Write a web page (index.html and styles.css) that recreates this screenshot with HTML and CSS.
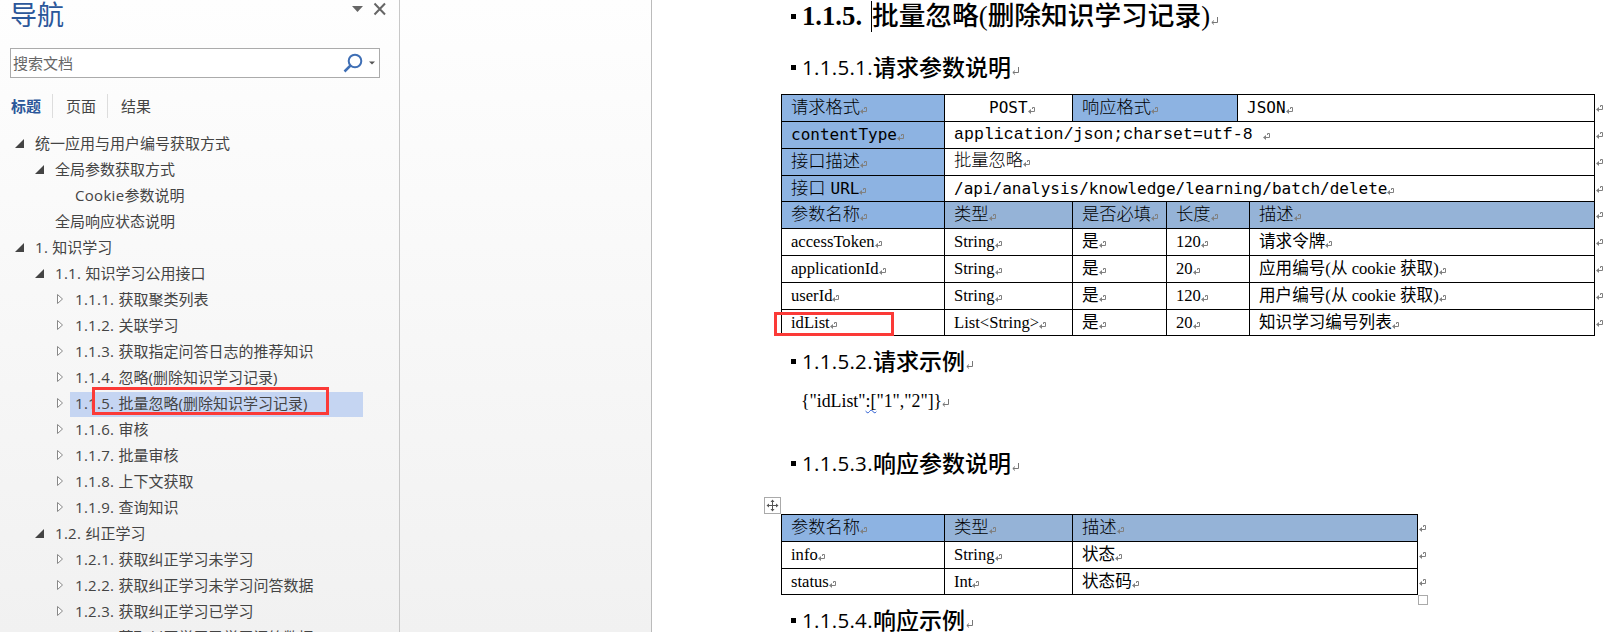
FILE: index.html
```html
<!DOCTYPE html>
<html lang="zh-CN">
<head>
<meta charset="utf-8">
<title>导航</title>
<link rel="stylesheet" href="styles.css">
</head>
<body>
<svg width="0" height="0" class="defs">
  <symbol id="cell" viewBox="0 0 8 8"><path d="M4.500 2V.5H6.500V4.500H1" fill="none" stroke="#808080"/><path d="M0 4.500L3 2V7Z" fill="#808080"/></symbol>
  <symbol id="para" viewBox="0 0 8 8"><path d="M6.500 0V5.500H1M3 3.500L.8 5.500L3 7.500" fill="none" stroke="#777"/></symbol>
</svg>
<div class="app">
  <aside class="nav">
    <header class="nav-head">
      <h1>导航</h1>
      <svg class="tools" width="36" height="14" viewBox="0 0 36 14"><path d="M2 4H13L7.500 10Z" fill="#666"/><path d="M24.500 1.500L35 12.500M35 1.500L24.500 12.500" stroke="#666" stroke-width="2" fill="none"/></svg>
    </header>
    <div class="search"><span>搜索文档</span>
      <svg width="34" height="20" viewBox="0 0 34 20"><circle cx="13" cy="8" r="6.300" fill="none" stroke="#3f6fb5" stroke-width="2"/><path d="M8.500 12.500L2.500 18.500" stroke="#3f6fb5" stroke-width="2.500"/><path d="M27 8.500H33L30 11.500Z" fill="#555"/></svg>
    </div>
    <div class="tabs"><b>标题</b><span>页面</span><span>结果</span></div>
    <ul class="tree" id="tree"></ul>
    <div class="mark mark-nav"></div>
  </aside>
  <div class="gap"></div>
  <main class="page">
    <h2 class="big"><i></i><b>1.1.5.</b><span class="caret"></span><span>批量忽略(删除知识学习记录)</span><svg class="pm"><use href="#para"/></svg></h2>
    <h3 class="h-a"><i></i><b>1.1.5.1.</b><span>请求参数说明</span><svg class="pm"><use href="#para"/></svg></h3>
    <div class="table" id="t1"></div>
    <h3 class="h-b"><i></i><b>1.1.5.2.</b><span>请求示例</span><svg class="pm"><use href="#para"/></svg></h3>
    <p class="json">{"idList"<span class="wave">:[</span>"1","2"]}<svg class="pm"><use href="#para"/></svg></p>
    <h3 class="h-c"><i></i><b>1.1.5.3.</b><span>响应参数说明</span><svg class="pm"><use href="#para"/></svg></h3>
    <div class="table" id="t2"></div>
    <h3 class="h-d"><i></i><b>1.1.5.4.</b><span>响应示例</span><svg class="pm"><use href="#para"/></svg></h3>
    <div class="mark mark-row"></div>
    <svg class="move" width="17" height="17" viewBox="0 0 17 17"><rect x=".5" y=".5" width="16" height="16" fill="#fff" stroke="#aaa"/><path d="M8.500 3V14M3 8.500H14" stroke="#555"/><path d="M8.500 2.500L10.500 5H6.500ZM8.500 14.500L10.500 12H6.500ZM2.500 8.500L5 6.500V10.500ZM14.500 8.500L12 6.500V10.500Z" fill="#555"/></svg>
    <div class="resize"></div>
  </main>
</div>
<script src="app.js"></script>
</body>
</html>
```

FILE: styles.css
```css
* { box-sizing: border-box; }
body { margin: 0; overflow: hidden; }
h1, h2, h3, p, ul { margin: 0; padding: 0; font-weight: normal; }
.defs { position: absolute; }
.app { display: flex; width: 1622px; height: 632px; overflow: hidden; background: linear-gradient(#fefefe, #f1f1f1); }

.nav { position: relative; width: 400px; height: 632px; border-right: 1px solid #c8c8c8; color: #444; font: 15px/26px "Open Sans", "Noto Sans CJK SC", sans-serif; flex: none; }
.nav-head { display: flex; justify-content: space-between; align-items: flex-start; height: 48px; padding: 0 13px 0 10px; }
.nav-head h1 { font: 27px/28px "Noto Sans CJK SC", sans-serif; color: #2b579a; }
.tools { margin-top: 2px; }
.search { display: flex; align-items: center; justify-content: space-between; width: 370px; height: 30px; margin-left: 10px; padding: 0 3px 0 2px; border: 1px solid #ababab; background: #fff; color: #666; }
.tabs { display: flex; height: 24px; margin: 16px 0 12px 11px; line-height: 24px; }
.tabs b { color: #2b579a; width: 42px; border-right: 1px solid #ddd; }
.tabs span { width: 55px; padding-left: 13px; border-right: 1px solid #ddd; }
.tabs span:last-child { border: 0; }
.tree { list-style: none; }
.tree li { display: flex; align-items: center; height: 26px; white-space: pre; }
.tree .lbl { height: 25px; line-height: 24px; margin-top: 1px; }
.tree em { font-style: normal; letter-spacing: .3px; }
.tree svg { flex: none; width: 20px; height: 12px; }
.tree .sel .lbl { background: #c5d5f2; width: 293px; height: 25px; margin-top: 3px; padding-left: 5px; margin-left: -5px; line-height: 22px; }
.lv0 { padding-left: 15px; }
.lv1 { padding-left: 35px; }
.lv2 { padding-left: 55px; }
.mark { position: absolute; border: 3px solid #fb3a37; }
.mark-nav { left: 92px; top: 387px; width: 237px; height: 28px; }

.gap { width: 251px; flex: none; }
.page { position: relative; flex: 1; border-left: 1px solid #bbb; background: #fff; color: #000; padding-left: 129px; }
.page h2, .page h3 { display: flex; align-items: center; padding-left: 10px; white-space: pre; }
.page i { width: 5px; height: 5px; background: #000; margin-right: 6px; }
.pm { width: 8px; height: 8px; flex: none; }
.big { height: 32px; font: 500 26.7px/32px "Liberation Serif", "Noto Sans CJK SC", serif; }
.big b { width: 69px; font-weight: bold; }
.big .caret { width: 1px; height: 31px; background: #000; }
.big .pm { margin: 10px 0 0 1px; }
.page h3 { height: 30px; font: 500 23px/28px "Noto Sans CJK SC", sans-serif; }
.page h3 b { font: 20.5px/30px "Open Sans", sans-serif; letter-spacing: .3px; width: 71px; }
.page h3 span { height: 30px; }
.page h3 .pm { margin: 8px 0 0 1px; }
.page .h-a { margin: 20px 0 12px; }
.page .h-b { margin-top: 10px; }
.json { height: 30px; margin: 10px 0 32px; padding-left: 20px; font: 17.8px/30px "Liberation Serif", serif; }
.page .h-c { margin-bottom: 36px; }
.page .h-d { margin-top: 10px; }
.wave { text-decoration: underline wavy #2a5bd0 1px; text-underline-offset: 2px; }

.row { display: flex; height: 27px; width: fit-content; align-items: stretch; }
.row.short { height: 26px; }
.c { border: solid #000; border-width: 1px 0 0 1px; padding-left: 9px; font: 16.6px/25px "Liberation Serif", "Noto Sans CJK SC", serif; white-space: pre; flex: none; }
.c.last { border-right-width: 1px; }
.table { border-bottom: 1px solid #000; }
#t1 { width: 814px; }
#t2 { width: 637px; }
.c .pm { margin-left: 0; vertical-align: -2px; }
.c.hd { background: #8db3e2; font: 300 17.3px/24px "DejaVu Sans Mono", "Noto Sans CJK SC", sans-serif; }
.c.sub { background: #95b3d7; }
.c.mono { font: 16px/25px "DejaVu Sans Mono", "Noto Sans CJK SC", monospace; }
.c.hd em { font-style: normal; font-size: 16px; }
.c.hd .url { margin-left: 5px; }
.c.song { font: 300 17.3px/26px "Liberation Mono", "Noto Sans CJK SC", monospace; }
.c.song em { font-style: normal; font-size: 16.6px; }
.c.mid { padding-left: 44px; }
.row > .end { width: 8px; height: 8px; margin: 11px -10px 0 1px; flex: none; }
.mark-row { left: 122px; top: 312px; width: 120px; height: 24px; }
.move { position: absolute; left: 112px; top: 497px; }
.resize { position: absolute; left: 766px; top: 595px; width: 10px; height: 10px; border: 1px solid #aaa; background: #fff; }
```

FILE: app.js
```js
const tree = [
  [0, '统一应用与用户编号获取方式', 'open'],
  [1, '全局参数获取方式', 'open'],
  [2, 'Cookie参数说明', ''],
  [1, '全局响应状态说明', ''],
  [0, '1. 知识学习', 'open'],
  [1, '1.1. 知识学习公用接口', 'open'],
  [2, '1.1.1. 获取聚类列表', 'shut'],
  [2, '1.1.2. 关联学习', 'shut'],
  [2, '1.1.3. 获取指定问答日志的推荐知识', 'shut'],
  [2, '1.1.4. 忽略(删除知识学习记录)', 'shut'],
  [2, '1.1.5. 批量忽略(删除知识学习记录)', 'shut', 'sel'],
  [2, '1.1.6. 审核', 'shut'],
  [2, '1.1.7. 批量审核', 'shut'],
  [2, '1.1.8. 上下文获取', 'shut'],
  [2, '1.1.9. 查询知识', 'shut'],
  [1, '1.2. 纠正学习', 'open'],
  [2, '1.2.1. 获取纠正学习未学习', 'shut'],
  [2, '1.2.2. 获取纠正学习未学习问答数据', 'shut'],
  [2, '1.2.3. 获取纠正学习已学习', 'shut'],
  [2, '1.2.4. 获取纠正学习已学习问答数据', 'shut']
];
const arrows = {
  open: '<path d="M0 11H9V2Z" fill="#444"/>',
  shut: '<path d="M2.500 1.500V10.500L7.500 6Z" fill="#fff" stroke="#888"/>',
  '': ''
};
document.getElementById('tree').innerHTML = tree.map(([lv, text, arrow, sel]) => {
  const label = text.replace(/^[\w. ]+/, m => `<em>${m}</em>`);
  return `<li class="lv${lv} ${sel || ''}"><svg viewBox="0 0 20 12">${arrows[arrow]}</svg><span class="lbl">${label}</span></li>`;
}).join('');

const mark = '<svg class="pm"><use href="#cell"/></svg>';
function table(id, rows) {
  document.getElementById(id).innerHTML = rows.map(([cls, cells]) =>
    `<div class="row ${cls}">` + cells.map(([w, text, kind], i) => {
      const last = i === cells.length - 1 ? 'last' : '';
      return `<div class="c ${kind || ''} ${last}" style="width:${w}px">${text}${mark}</div>`;
    }).join('') + '<svg class="end"><use href="#cell"/></svg></div>'
  ).join('');
}
const param = (name, type, size, desc) =>
  [[163, name], [128, type], [94, '是'], [83, size], [346, desc]];
table('t1', [
  ['', [[163, '请求格式', 'hd'], [128, 'POST', 'mono mid'], [165, '响应格式', 'hd'], [358, 'JSON', 'mono']]],
  ['', [[163, '<em>contentType</em>', 'hd'], [651, '<em>application/json;charset=utf-8 </em>', 'song']]],
  ['', [[163, '接口描述', 'hd'], [651, '批量忽略', 'song']]],
  ['short', [[163, '接口<em class="url">URL</em>', 'hd'], [651, '/api/analysis/knowledge/learning/batch/delete', 'mono']]],
  ['', [[163, '参数名称', 'hd'], [128, '类型', 'hd sub'], [94, '是否必填', 'hd sub'], [83, '长度', 'hd sub'], [346, '描述', 'hd sub']]],
  ['', param('accessToken', 'String', '120', '请求令牌')],
  ['', param('applicationId', 'String', '20', '应用编号(从 cookie 获取)')],
  ['', param('userId', 'String', '120', '用户编号(从 cookie 获取)')],
  ['short', param('idList', 'List&lt;String&gt;', '20', '知识学习编号列表')]
]);
table('t2', [
  ['', [[163, '参数名称', 'hd'], [128, '类型', 'hd sub'], [346, '描述', 'hd sub']]],
  ['', [[163, 'info'], [128, 'String'], [346, '状态']]],
  ['short', [[163, 'status'], [128, 'Int'], [346, '状态码']]]
]);
```
